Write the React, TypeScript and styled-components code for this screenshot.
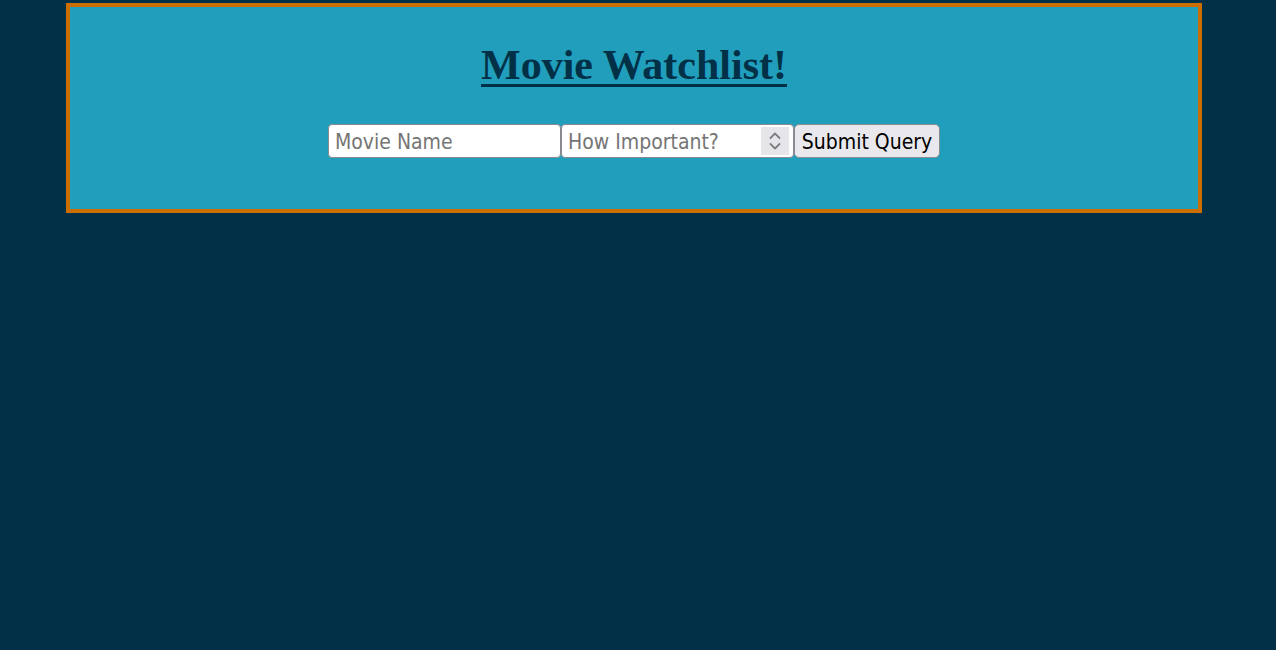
import React from "react";
import styled, { createGlobalStyle } from "styled-components";

const Global = createGlobalStyle`
  html, body { margin: 0; padding: 0; background: #023047; }
  body { min-height: 650px; }
`;

const Page = styled.div`
  padding: 3px 74px 0 66px;
`;

const Card = styled.div`
  box-sizing: border-box;
  height: 210px;
  border: 4px solid #cc6d00;
  background: #219ebc;
  display: flex;
  flex-direction: column;
  align-items: center;
  padding-top: 34px;
`;

const Title = styled.h1`
  margin: 0;
  font-family: "Liberation Serif", "Times New Roman", serif;
  font-weight: bold;
  font-size: 42px;
  line-height: 48px;
  color: #023047;
  text-decoration: underline;
  text-decoration-thickness: 3px;
  text-underline-offset: 5px;
`;

const Form = styled.form`
  display: flex;
  margin-top: 35px;
`;

const Field = styled.input`
  box-sizing: border-box;
  width: 233px;
  height: 34px;
  border: 1px solid #8a8a90;
  border-radius: 4px;
  background: #fff;
  padding: 1px 6px 0;
  font-family: "DejaVu Sans Condensed", "DejaVu Sans", sans-serif;
  font-size: 21px;
  color: #000;
  &::placeholder { color: #757575; }
  &::-webkit-inner-spin-button,
  &::-webkit-outer-spin-button {
    -webkit-appearance: none;
    margin: 0;
  }
`;

const NumberWrap = styled.div`
  position: relative;
  display: flex;
`;

const Spinner = styled.div`
  position: absolute;
  top: 3px;
  right: 5px;
  width: 28px;
  height: 28px;
  background: #e6e6ea;
  display: flex;
  align-items: center;
  justify-content: center;
  pointer-events: none;
`;

const Button = styled.button`
  box-sizing: border-box;
  width: 146px;
  height: 34px;
  border: 1px solid #8a8a90;
  border-radius: 5px;
  background: #e9e9ed;
  font-family: "DejaVu Sans Condensed", "DejaVu Sans", sans-serif;
  font-size: 21px;
  color: #000;
  padding: 1px 6px 0;
`;

export default function App() {
  return (
    <>
      <Global />
      <Page>
        <Card>
          <Title>Movie Watchlist!</Title>
          <Form onSubmit={(e) => e.preventDefault()}>
            <Field type="text" placeholder="Movie Name" />
            <NumberWrap>
              <Field type="number" placeholder="How Important?" />
              <Spinner>
                <svg width="14" height="20" viewBox="0 0 14 20" fill="none" stroke="#7d7d80" strokeWidth="1.8" strokeLinecap="round" strokeLinejoin="round">
                  <path d="M2.5 7 L7 2.5 L11.5 7" />
                  <path d="M2.5 13 L7 17.5 L11.5 13" />
                </svg>
              </Spinner>
            </NumberWrap>
            <Button type="submit">Submit Query</Button>
          </Form>
        </Card>
      </Page>
    </>
  );
}
